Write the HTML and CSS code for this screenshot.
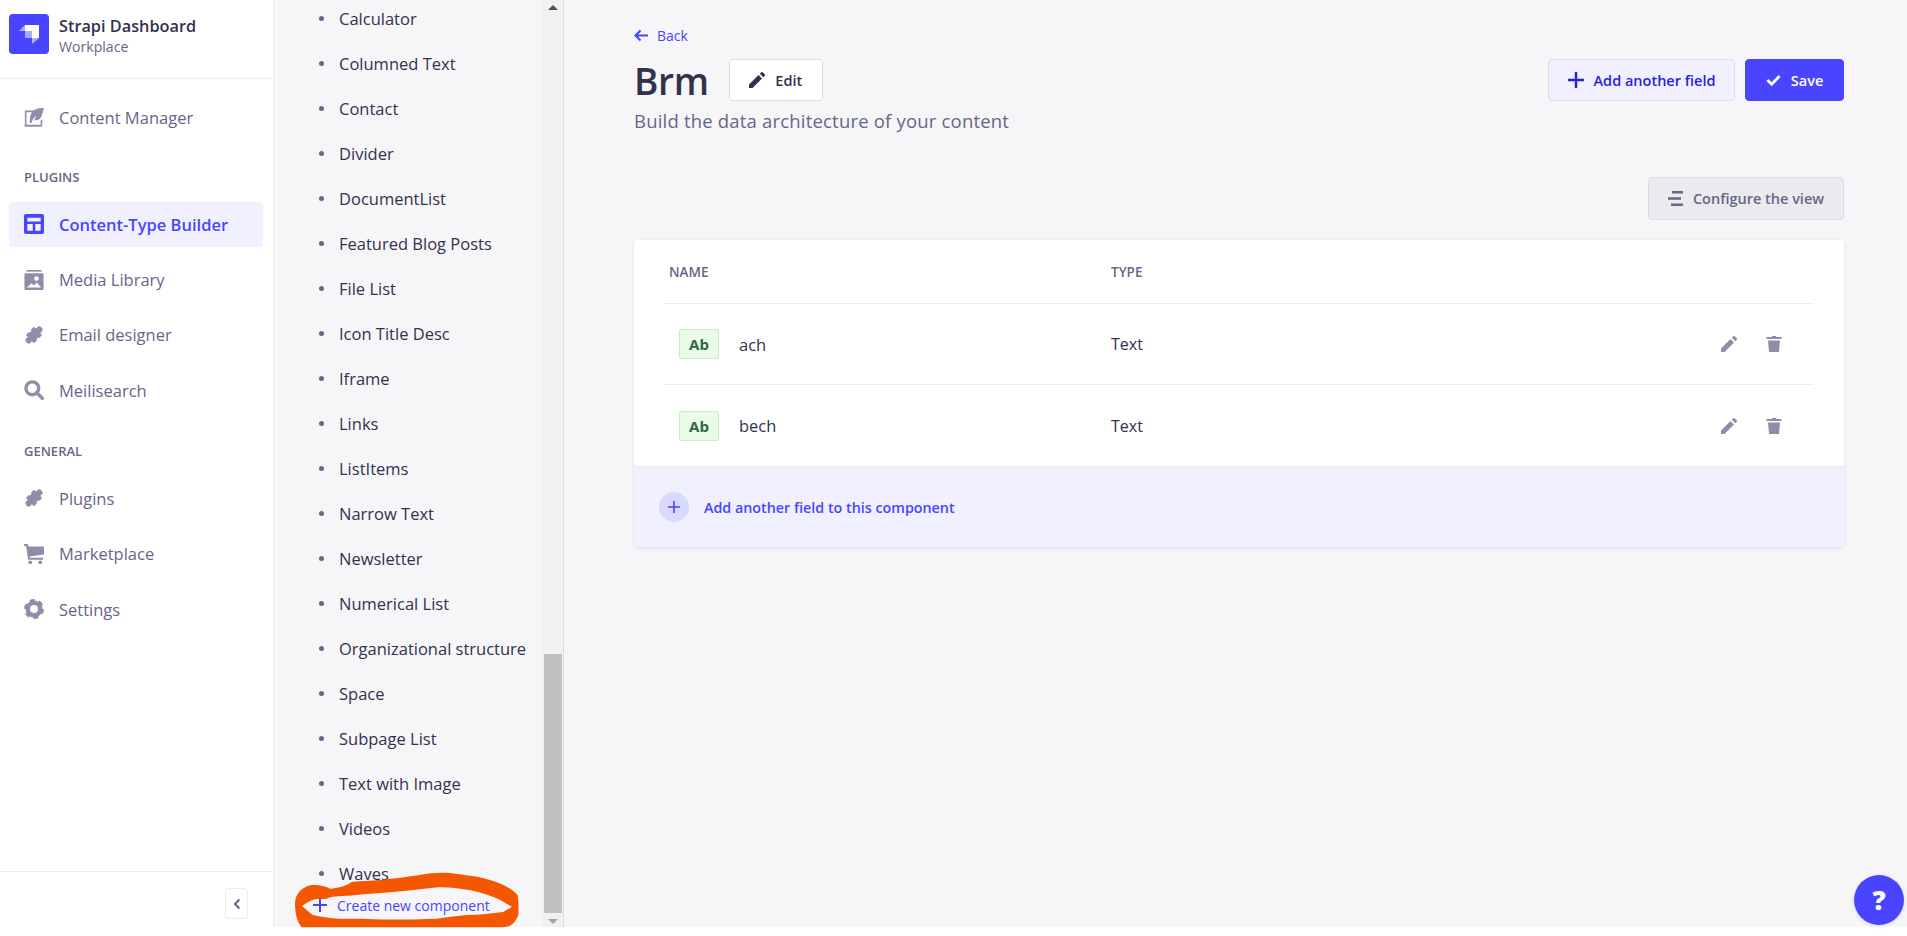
FILE: index.html
```html
<!DOCTYPE html>
<html lang="en">
<head>
<meta charset="utf-8">
<title>Brm</title>
<link rel="stylesheet" href="styles.css">
</head>
<body>
<div class="app">
  <aside class="sidebar">
    <header class="brand">
      <div class="brand-logo">
        <svg viewBox="0 0 24 24" width="24" height="24"><path d="M8 3h14v13H15V9H8z" fill="#fff"/><path d="M8 3v6H2z" fill="#fff" opacity=".55"/><path d="M8 9h7v7H8z" fill="#fff" opacity=".55"/><path d="M15 16h7l-7 6z" fill="#fff" opacity=".55"/></svg>
      </div>
      <div class="brand-text">
        <div class="brand-name">Strapi Dashboard</div>
        <div class="brand-sub">Workplace</div>
      </div>
    </header>
    <nav class="nav">
      <div class="nav-group">
        <a class="nav-row"><svg class="nav-icon" viewBox="0 0 24 24"><path d="M1 3h11v2H3v15h17v-6h2v7a1.500 1.500 0 0 1-1.500 1.500h-18A1.500 1.500 0 0 1 1 20z"/><path d="M24 0c-8 0-14 2-16 8-1 3-1 6-1 10h2c1-4 3-7 6-9l-3 6c6 0 9-3 10-8z"/></svg><span>Content Manager</span></a>
      </div>
      <div class="nav-label">PLUGINS</div>
      <div class="nav-group">
        <a class="nav-row active"><svg class="nav-icon" viewBox="0 0 24 24"><path fill-rule="evenodd" d="M2 0h20a2 2 0 0 1 2 2v20a2 2 0 0 1-2 2H2a2 2 0 0 1-2-2V2a2 2 0 0 1 2-2zM4 4.500v4.500h16V4.500zM4 12v8h6.500v-8zM13.500 12v8H20v-8z"/></svg><span>Content-Type Builder</span></a>
        <a class="nav-row"><svg class="nav-icon" viewBox="0 0 24 24"><path d="M3 0h18v2H3z"/><path fill-rule="evenodd" d="M2 4h20a1.500 1.500 0 0 1 1.500 1.500v17A1.500 1.500 0 0 1 22 24H2a1.500 1.500 0 0 1-1.500-1.500v-17A1.500 1.500 0 0 1 2 4zM3.500 21h17l-5-6-3.500 3.500-3-2.500zM15 7.500a2.800 2.800 0 1 0 0.010 0z"/></svg><span>Media Library</span></a>
        <a class="nav-row"><svg class="nav-icon" viewBox="0 0 24 24"><g transform="rotate(-45 12 12)"><rect x="5" y="5" width="14" height="14" rx="1"/><circle cx="21" cy="12" r="3.800"/><circle cx="3" cy="12" r="3.800"/><circle cx="12" cy="4.600" r="2" fill="#fff"/><circle cx="12" cy="19.400" r="2" fill="#fff"/></g></svg><span>Email designer</span></a>
        <a class="nav-row"><svg class="nav-icon" viewBox="0 0 24 24"><circle cx="10" cy="10" r="7.700" fill="none" stroke="currentColor" stroke-width="4"/><path d="M15 15l7 7" stroke="currentColor" stroke-width="4.200" stroke-linecap="round"/></svg><span>Meilisearch</span></a>
      </div>
      <div class="nav-label nav-label-general">GENERAL</div>
      <div class="nav-group">
        <a class="nav-row"><svg class="nav-icon" viewBox="0 0 24 24"><g transform="rotate(-45 12 12)"><rect x="5" y="5" width="14" height="14" rx="1"/><circle cx="21" cy="12" r="3.800"/><circle cx="3" cy="12" r="3.800"/><circle cx="12" cy="4.600" r="2" fill="#fff"/><circle cx="12" cy="19.400" r="2" fill="#fff"/></g></svg><span>Plugins</span></a>
        <a class="nav-row"><svg class="nav-icon" viewBox="0 0 24 24"><path d="M0 0h4.500l1 3H24v9.500L6.800 15l.4 1.500H23V19H5L2.500 2.500H0z"/><circle cx="7.500" cy="22" r="2.200"/><circle cx="19.500" cy="22" r="2.200"/></svg><span>Marketplace</span></a>
        <a class="nav-row"><svg class="nav-icon" viewBox="0 0 24 24"><circle cx="12" cy="12" r="7.500" fill="none" stroke="currentColor" stroke-width="5.500"/><circle cx="12" cy="12" r="10.500" fill="none" stroke="currentColor" stroke-width="3" stroke-dasharray="6 5"/></svg><span>Settings</span></a>
      </div>
    </nav>
    <footer class="side-foot">
      <button class="collapse"><svg viewBox="0 0 10 14" width="8" height="12"><path d="M8 1.500L2.500 7 8 12.500" fill="none" stroke="currentColor" stroke-width="2.600"/></svg></button>
    </footer>
  </aside>

  <section class="subnav">
    <div class="subnav-col">
      <ul class="comp-list">
        <li>Calculator</li>
        <li>Columned Text</li>
        <li>Contact</li>
        <li>Divider</li>
        <li>DocumentList</li>
        <li>Featured Blog Posts</li>
        <li>File List</li>
        <li>Icon Title Desc</li>
        <li>Iframe</li>
        <li>Links</li>
        <li>ListItems</li>
        <li>Narrow Text</li>
        <li>Newsletter</li>
        <li>Numerical List</li>
        <li>Organizational structure</li>
        <li>Space</li>
        <li>Subpage List</li>
        <li>Text with Image</li>
        <li>Videos</li>
        <li>Waves</li>
      </ul>
      <a class="create-new"><svg viewBox="0 0 14 14" width="14" height="14"><path d="M6 0h2v6h6v2H8v6H6V8H0V6h6z" fill="currentColor"/></svg><span>Create new component</span></a>
    </div>
    <div class="scrollbar">
      <div class="scroll-arrow scroll-up"></div>
      <div class="scroll-space"></div>
      <div class="scroll-thumb"></div>
      <div class="scroll-arrow scroll-down"></div>
    </div>
  </section>

  <main class="main">
    <a class="back"><svg viewBox="0 0 14 12" width="14" height="13"><path d="M6.500 1L1.500 6l5 5M1.800 6H14" fill="none" stroke="currentColor" stroke-width="2"/></svg><span>Back</span></a>
    <div class="head">
      <div class="head-left">
        <h1 class="title">Brm</h1>
        <button class="btn btn-edit"><svg viewBox="0 0 16 16" width="16" height="16"><path d="M0 16v-3.500L9.500 3 13 6.500 3.500 16zM10.800 1.700L12 .5a1.400 1.400 0 0 1 2 0l1.500 1.500a1.400 1.400 0 0 1 0 2l-1.200 1.200z" fill="currentColor"/></svg><span>Edit</span></button>
      </div>
      <div class="head-right">
        <button class="btn btn-add"><svg viewBox="0 0 16 16" width="16" height="16"><path d="M6.800 0h2.400v6.800H16v2.400H9.200V16H6.800V9.200H0V6.800h6.800z" fill="currentColor"/></svg><span>Add another field</span></button>
        <button class="btn btn-save"><svg viewBox="0 0 16 12" width="15" height="12"><path d="M1.500 6l4.500 4.500L14.500 1.800" fill="none" stroke="currentColor" stroke-width="3"/></svg><span>Save</span></button>
      </div>
    </div>
    <p class="subtitle">Build the data architecture of your content</p>
    <div class="config-row">
      <button class="btn btn-config"><svg viewBox="0 0 15 15" width="15" height="15"><path d="M4 0h11v2.600H4zM0 6.200h13v2.600H0zM3 12.400h12V15H3z" fill="currentColor"/></svg><span>Configure the view</span></button>
    </div>
    <div class="card">
      <div class="table">
        <div class="t-row t-head"><div class="c-name">NAME</div><div class="c-type">TYPE</div></div>
        <div class="t-row t-body">
          <div class="c-name"><span class="badge">Ab</span><span class="field">ach</span></div>
          <div class="c-type">Text</div>
          <div class="c-act">
            <svg class="act" viewBox="0 0 16 16"><path d="M0 16v-3.500L9.500 3 13 6.500 3.500 16zM10.800 1.700L12 .5a1.400 1.400 0 0 1 2 0l1.500 1.500a1.400 1.400 0 0 1 0 2l-1.200 1.200z"/></svg>
            <svg class="act" viewBox="0 0 16 16"><path d="M6 0h4v1h5.500v2H.5V1H6zM2 4.500h12L13 16H3z"/></svg>
          </div>
        </div>
        <div class="t-row t-body">
          <div class="c-name"><span class="badge">Ab</span><span class="field">bech</span></div>
          <div class="c-type">Text</div>
          <div class="c-act">
            <svg class="act" viewBox="0 0 16 16"><path d="M0 16v-3.500L9.500 3 13 6.500 3.500 16zM10.800 1.700L12 .5a1.400 1.400 0 0 1 2 0l1.500 1.500a1.400 1.400 0 0 1 0 2l-1.200 1.200z"/></svg>
            <svg class="act" viewBox="0 0 16 16"><path d="M6 0h4v1h5.500v2H.5V1H6zM2 4.500h12L13 16H3z"/></svg>
          </div>
        </div>
      </div>
      <a class="card-foot"><span class="plus-circle"><svg viewBox="0 0 12 12" width="12" height="12"><path d="M5.200 0h1.600v5.200H12v1.600H6.800V12H5.200V6.800H0V5.200h5.200z" fill="currentColor"/></svg></span><span>Add another field to this component</span></a>
    </div>
  </main>
</div>

<button class="help">?</button>

<svg class="scribble" viewBox="0 0 1080 468" width="360" height="156"><path fill-rule="evenodd" fill="#f55600" d="M225 370C226 345 240 325 270 316C290 313 312 316 330 326C350 325 380 318 395 306C430 302 470 303 500 297C540 296 570 288 600 285C630 278 660 277 690 279C720 282 750 288 775 291C800 296 830 305 852 316C870 326 885 335 893 346C896 365 896 385 895 405C890 420 880 432 868 438C858 441 848 442 838 442H245C235 430 225 410 225 370ZM246 378C258 388 268 398 278 405C300 410 330 415 360 416C395 418 430 414 460 418C520 420 590 418 650 416C685 410 715 408 740 405C780 405 815 400 850 396C860 390 870 385 876 380C860 372 840 358 820 351C790 340 760 330 730 328C700 322 670 320 640 323C600 328 560 332 520 336C480 340 440 340 400 346C370 350 340 346 320 356C305 358 295 356 285 358C270 362 255 372 246 378Z"/></svg>
</body>
</html>
```

FILE: styles.css
```css
* { box-sizing: border-box; }
html { background: #fff; }
body {
  margin: 0;
  font-family: "Open Sans", "Noto Sans", sans-serif;
  color: #32324d;
  overflow: hidden;
}
a { text-decoration: none; color: inherit; }
button { font-family: inherit; cursor: pointer; }

.app {
  display: flex;
  height: 927px;
  background: #f6f6f9;
}

/* Sidebar */
.sidebar {
  width: 274px;
  flex: none;
  background: #fff;
  border-right: 1px solid #eaeaef;
  display: flex;
  flex-direction: column;
}
.brand {
  height: 79px;
  flex: none;
  border-bottom: 1px solid #eaeaef;
  padding: 14px 0 0 9px;
  display: flex;
  gap: 10px;
}
.brand-logo {
  width: 40px;
  height: 40px;
  background: #4945ff;
  border-radius: 4px;
  display: flex;
  align-items: center;
  justify-content: center;
}
.brand-text { padding-top: 1px; }
.brand-name {
  font-size: 16.3px;
  font-weight: 600;
  line-height: 22px;
  color: #32324d;
}
.brand-sub {
  font-size: 14.1px;
  line-height: 19px;
  color: #666687;
}
.nav {
  flex: 1;
  padding: 16.350px 10px 0 9px;
}
.nav-group {
  display: flex;
  flex-direction: column;
  gap: 10px;
}
.nav-row {
  height: 45.3px;
  padding-left: 15px;
  display: flex;
  align-items: center;
  gap: 15px;
  font-size: 16.5px;
  color: #666687;
  border-radius: 4px;
}
.nav-icon {
  width: 20px;
  height: 20px;
  flex: none;
  fill: #8e8ea9;
  color: #8e8ea9;
}
.nav-row.active {
  background: #f0f0ff;
  color: #4945ff;
  font-weight: 600;
}
.nav-row.active .nav-icon { fill: #4945ff; }
.nav-label {
  padding: 28px 0 17px 15px;
  font-size: 13px;
  line-height: 16px;
  font-weight: 600;
  color: #666687;
}
.nav-label-general { margin-top: 2px; }
.side-foot {
  height: 56px;
  flex: none;
  border-top: 1px solid #eaeaef;
  padding: 16px 25px 0 0;
  display: flex;
  justify-content: flex-end;
  align-items: flex-start;
}
.collapse {
  width: 23px;
  height: 31px;
  padding: 0;
  background: #fff;
  border: 1px solid #eaeaef;
  border-radius: 4px;
  color: #666687;
  display: flex;
  align-items: center;
  justify-content: center;
}

/* Sub navigation */
.subnav {
  width: 290px;
  flex: none;
  display: flex;
}
.subnav-col {
  flex: 1;
  min-width: 0;
  display: flex;
  flex-direction: column;
}
.comp-list {
  flex: 1;
  min-height: 0;
  list-style: none;
  margin: 0;
  padding: 0 0 0 65px;
}
.comp-list li {
  height: 45px;
  display: flex;
  align-items: center;
  font-size: 16.5px;
  color: #32324d;
  position: relative;
  top: -4px;
}
.comp-list li::before {
  content: "";
  position: absolute;
  left: -20px;
  top: 20px;
  width: 5px;
  height: 5px;
  border-radius: 50%;
  background: #666687;
}
.create-new {
  height: 44px;
  flex: none;
  padding-left: 39px;
  display: flex;
  align-items: center;
  gap: 10px;
  font-size: 14px;
  color: #4945ff;
}
.scrollbar {
  width: 22px;
  flex: none;
  background: #f1f1f1;
  border-right: 1px solid #dcdce4;
  display: flex;
  flex-direction: column;
  align-items: center;
}
.scroll-arrow {
  width: 0;
  height: 0;
  flex: none;
  border-left: 5px solid transparent;
  border-right: 5px solid transparent;
}
.scroll-up { border-bottom: 5px solid #505050; margin: 5px 0 4px; }
.scroll-down { border-top: 5px solid #a3a3a3; margin: 6px 0 3px; }
.scroll-space { flex: 1; }
.scroll-thumb {
  width: 18px;
  height: 259px;
  flex: none;
  background: #c1c1c1;
}

/* Main */
.main {
  flex: 1;
  min-width: 0;
  padding: 25px 63px 0 70px;
}
.back {
  height: 20px;
  margin-bottom: 14px;
  display: flex;
  align-items: center;
  gap: 9px;
  font-size: 14px;
  color: #4945ff;
}
.head {
  height: 42px;
  display: flex;
  justify-content: space-between;
  align-items: center;
}
.head-left {
  display: flex;
  align-items: center;
  gap: 20px;
}
.head-right {
  display: flex;
  gap: 10px;
}
.title {
  margin: 0;
  padding-top: 2px;
  font-size: 37px;
  line-height: 42px;
  font-weight: 600;
  color: #32324d;
  letter-spacing: -.3px;
}
.btn {
  height: 42px;
  border-radius: 4px;
  display: flex;
  align-items: center;
  justify-content: center;
  gap: 10px;
  font-size: 14.5px;
  font-weight: 600;
  padding: 0;
}
.btn-edit {
  width: 94px;
  background: #fff;
  border: 1px solid #dcdce4;
  color: #32324d;
}
.btn-add {
  width: 187px;
  background: #f0f0ff;
  border: 1px solid #d9d8ff;
  color: #271fe0;
}
.btn-save {
  width: 99px;
  background: #4945ff;
  border: 1px solid #4945ff;
  color: #fff;
}
.subtitle {
  margin: 8px 0 0;
  font-size: 18.5px;
  line-height: 24px;
  letter-spacing: .19px;
  color: #666687;
}
.config-row {
  margin-top: 44px;
  display: flex;
  justify-content: flex-end;
}
.btn-config {
  width: 196px;
  height: 43px;
  background: #eaeaef;
  border: 1px solid #dcdce4;
  color: #666687;
}
.card {
  margin-top: 20px;
  background: #fff;
  border-radius: 4px;
  box-shadow: 0 1px 4px rgba(33, 33, 52, .1);
  overflow: hidden;
}
.table { padding: 0 30px; }
.t-row {
  display: flex;
  align-items: center;
  border-bottom: 1px solid #eaeaef;
}
.t-row:last-child { border-bottom: 0; }
.t-head {
  height: 64px;
  font-size: 13.5px;
  font-weight: 600;
  color: #666687;
}
.t-body {
  height: 81px;
  font-size: 16px;
  color: #32324d;
}
.c-name {
  width: 447px;
  padding-left: 5px;
  display: flex;
  align-items: center;
}
.c-type { flex: 1; }
.t-body .c-name { padding-left: 15px; }
.badge {
  width: 40px;
  height: 30px;
  background: #eafbe7;
  border: 1px solid #c6f0c2;
  border-radius: 2px;
  color: #2f6846;
  font-size: 15px;
  font-weight: 700;
  display: flex;
  align-items: center;
  justify-content: center;
  margin-right: 20px;
}
.field { font-weight: 500; font-size: 16.5px; }
.c-act {
  display: flex;
  gap: 29px;
  padding-right: 32px;
}
.act {
  width: 16px;
  height: 16px;
  fill: #8e8ea9;
}
.card-foot {
  height: 81px;
  background: #f0f0ff;
  border-top: 1px solid #eaeaef;
  padding-left: 25px;
  display: flex;
  align-items: center;
  gap: 15px;
  font-size: 14.3px;
  font-weight: 600;
  color: #4945ff;
}
.plus-circle {
  width: 30px;
  height: 30px;
  border-radius: 50%;
  background: #d9d8ff;
  display: flex;
  align-items: center;
  justify-content: center;
}

/* Overlays */
.help {
  position: absolute;
  left: 1854px;
  top: 875px;
  width: 50px;
  height: 50px;
  padding: 0;
  border: 0;
  border-radius: 50%;
  background: #4945ff;
  color: #fff;
  font-size: 26px;
  font-weight: 800;
  line-height: 50px;
  text-align: center;
  box-shadow: 0 1px 4px rgba(33, 33, 52, .1);
}
.scribble {
  position: absolute;
  left: 220px;
  top: 780px;
  pointer-events: none;
}
```
